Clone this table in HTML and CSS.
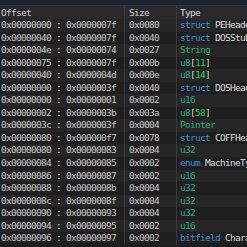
FILE: index.html
```html
<!DOCTYPE html>
<html lang="en">
<head>
    <meta charset="UTF-8">
    <title>Pattern Data</title>
    <link rel="stylesheet" href="styles.css">
</head>
<body>
    <div class="titlebar"></div>
    <div class="table">
        <div class="row head">
            <div class="cell offset">Offset</div>
            <div class="cell size">Size</div>
            <div class="cell type">Type</div>
        </div>
        <div class="row">
            <div class="cell offset">0x00000000 : 0x0000007f</div>
            <div class="cell size">0x0080</div>
            <div class="cell type"><span class="kw">struct</span> <span class="name">PEHeader</span></div>
        </div>
        <div class="row">
            <div class="cell offset">0x00000040 : 0x0000007f</div>
            <div class="cell size">0x0040</div>
            <div class="cell type"><span class="kw">struct</span> <span class="name">DOSStub</span></div>
        </div>
        <div class="row">
            <div class="cell offset">0x0000004e : 0x00000074</div>
            <div class="cell size">0x0027</div>
            <div class="cell type"><span class="str">String</span></div>
        </div>
        <div class="row">
            <div class="cell offset">0x00000075 : 0x0000007f</div>
            <div class="cell size">0x000b</div>
            <div class="cell type"><span class="builtin">u8</span>[<span class="num">11</span>]</div>
        </div>
        <div class="row">
            <div class="cell offset">0x00000040 : 0x0000004d</div>
            <div class="cell size">0x000e</div>
            <div class="cell type"><span class="builtin">u8</span>[<span class="num">14</span>]</div>
        </div>
        <div class="row">
            <div class="cell offset">0x00000000 : 0x0000003f</div>
            <div class="cell size">0x0040</div>
            <div class="cell type"><span class="kw">struct</span> <span class="name">DOSHeader</span></div>
        </div>
        <div class="row">
            <div class="cell offset">0x00000000 : 0x00000001</div>
            <div class="cell size">0x0002</div>
            <div class="cell type"><span class="builtin">u16</span></div>
        </div>
        <div class="row">
            <div class="cell offset">0x00000002 : 0x0000003b</div>
            <div class="cell size">0x003a</div>
            <div class="cell type"><span class="builtin">u8</span>[<span class="num">58</span>]</div>
        </div>
        <div class="row">
            <div class="cell offset">0x0000003c : 0x0000003f</div>
            <div class="cell size">0x0004</div>
            <div class="cell type"><span class="str">Pointer</span></div>
        </div>
        <div class="row">
            <div class="cell offset">0x00000080 : 0x000000f7</div>
            <div class="cell size">0x0078</div>
            <div class="cell type"><span class="kw">struct</span> <span class="name">COFFHeader</span></div>
        </div>
        <div class="row">
            <div class="cell offset">0x00000080 : 0x00000083</div>
            <div class="cell size">0x0004</div>
            <div class="cell type"><span class="builtin">u32</span></div>
        </div>
        <div class="row">
            <div class="cell offset">0x00000084 : 0x00000085</div>
            <div class="cell size">0x0002</div>
            <div class="cell type"><span class="kw">enum</span> <span class="name">MachineType</span></div>
        </div>
        <div class="row">
            <div class="cell offset">0x00000086 : 0x00000087</div>
            <div class="cell size">0x0002</div>
            <div class="cell type"><span class="builtin">u16</span></div>
        </div>
        <div class="row">
            <div class="cell offset">0x00000088 : 0x0000008b</div>
            <div class="cell size">0x0004</div>
            <div class="cell type"><span class="builtin">u32</span></div>
        </div>
        <div class="row">
            <div class="cell offset">0x0000008c : 0x0000008f</div>
            <div class="cell size">0x0004</div>
            <div class="cell type"><span class="builtin">u32</span></div>
        </div>
        <div class="row">
            <div class="cell offset">0x00000090 : 0x00000093</div>
            <div class="cell size">0x0004</div>
            <div class="cell type"><span class="builtin">u32</span></div>
        </div>
        <div class="row">
            <div class="cell offset">0x00000094 : 0x00000095</div>
            <div class="cell size">0x0002</div>
            <div class="cell type"><span class="builtin">u16</span></div>
        </div>
        <div class="row">
            <div class="cell offset">0x00000096 : 0x00000097</div>
            <div class="cell size">0x0002</div>
            <div class="cell type"><span class="kw">bitfield</span> <span class="name">Characteristics</span></div>
        </div>
    </div>
</body>
</html>
```

FILE: styles.css
```css
* {
    box-sizing: border-box;
    margin: 0;
    padding: 0;
}

body {
    width: 247px;
    height: 247px;
    overflow: hidden;
    background: #1c1c1c;
    font-family: 'DejaVu Sans Mono', 'Liberation Mono', monospace;
    font-size: 9.5px;
    letter-spacing: -0.72px;
    color: #c9c9c9;
}

.titlebar {
    height: 6px;
    background: #1b2230;
    border-bottom: 1px solid #2c3a50;
}

.row {
    display: grid;
    grid-template-columns: 124px 52px 1fr;
    height: 12.55px;
    line-height: 12.55px;
    white-space: nowrap;
    background: #1f1f1f;
}

.row:nth-child(even) {
    background: #262626;
}

.row.head {
    height: 13px;
    line-height: 13px;
    background: #2a2a2a;
    color: #cfcfcf;
}

.cell {
    overflow: hidden;
    padding-left: 1px;
    border-left: 1px solid #3a3a3a;
}

.cell.offset {
    border-left: none;
}

.cell.size {
    padding-left: 4px;
}

.cell.type {
    padding-left: 3px;
    color: #dcdcdc;
}

.kw {
    color: #3f8fd4;
}

.name {
    color: #dcdcdc;
}

.str {
    color: #2fae6f;
}

.builtin {
    color: #2fa88a;
}

.num {
    color: #22d34c;
}
```
